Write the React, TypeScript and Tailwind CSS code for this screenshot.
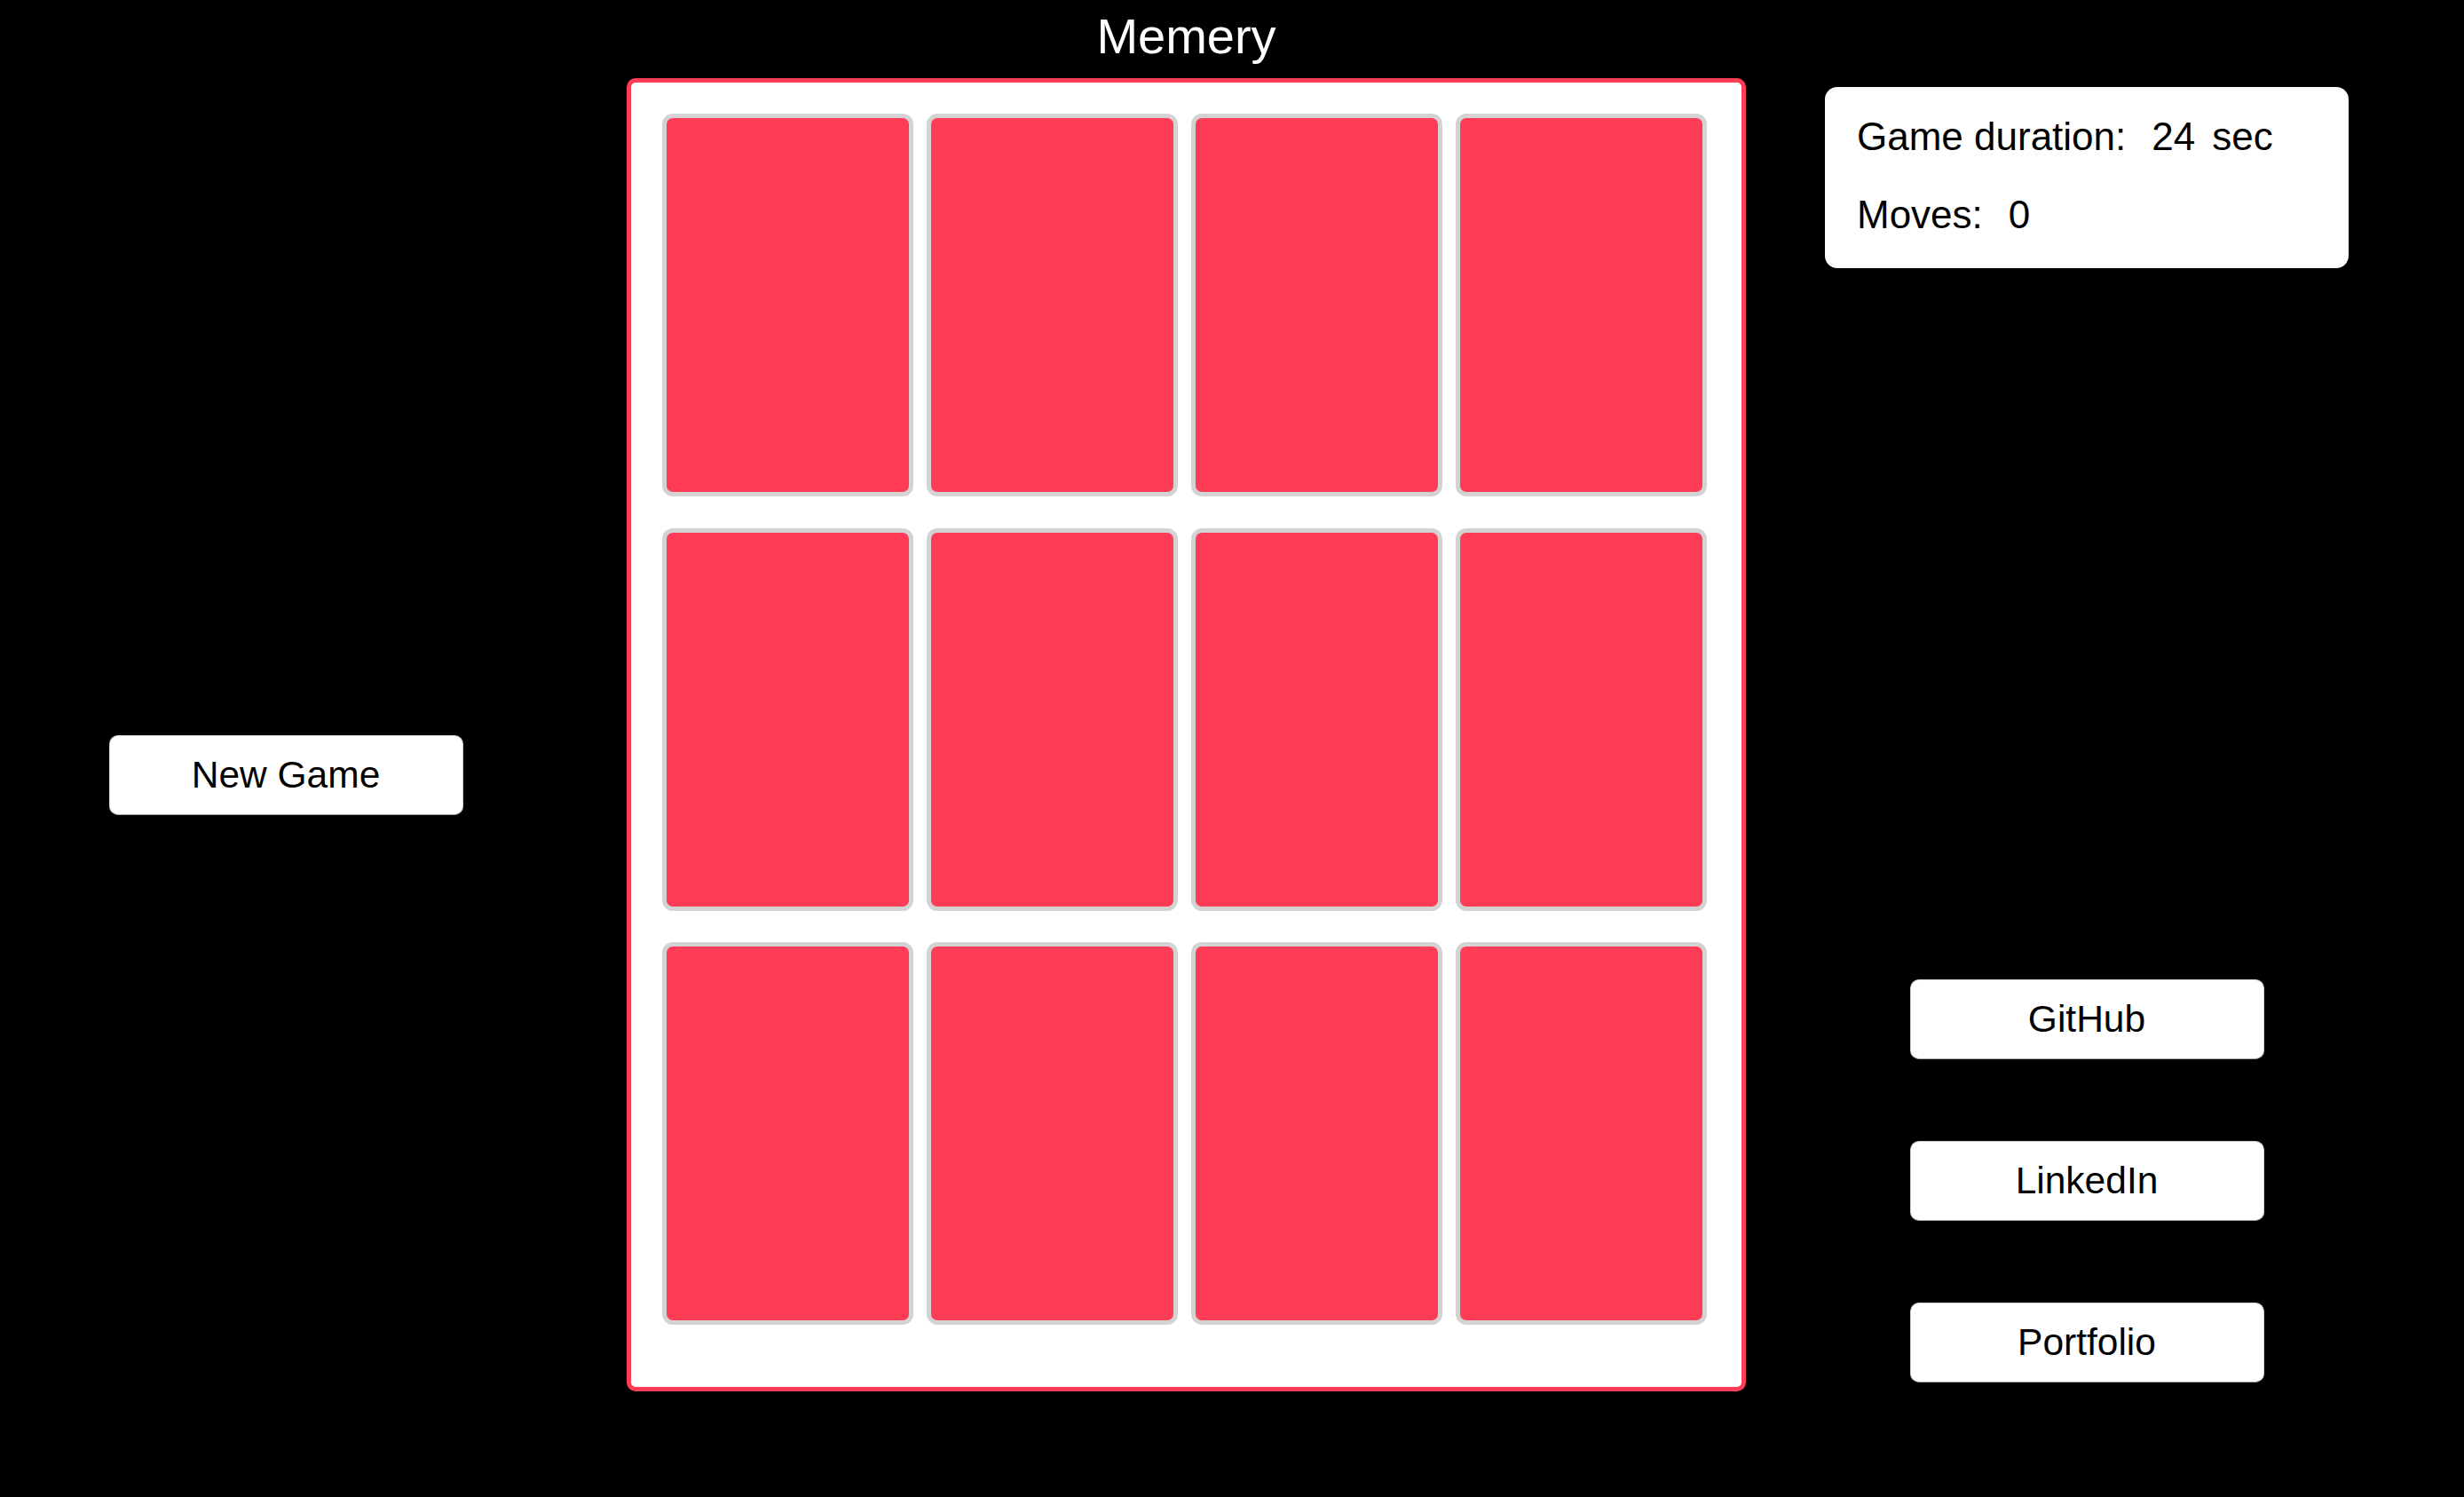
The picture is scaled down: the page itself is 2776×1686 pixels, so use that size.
import React from "react";

const CARD_COUNT = 12;

const MenuButton: React.FC<{ label: string }> = ({ label }) => (
  <button className="w-[399px] h-[90px] rounded-[10px] bg-white border-[1.5px] border-[#d4d4d4] border-b-[#a8a8a8] text-[42.5px] leading-none text-black">
    {label}
  </button>
);

const Card: React.FC = () => (
  <div className="h-[431px] rounded-[12px] border-[5px] border-[#d3d3d3] bg-[#ff3c56]" />
);

export default function App() {
  const duration = 24;
  const moves = 0;

  return (
    <div className="min-h-screen w-full bg-black flex font-['Liberation_Sans',Arial,sans-serif]">
      {/* left side */}
      <aside className="w-[644px] shrink-0 flex flex-col items-center pt-[828px]">
        <MenuButton label="New Game" />
      </aside>

      {/* board */}
      <main className="ml-[62px] shrink-0 flex flex-col items-center">
        <h1 className="pt-[13px] text-[56px] leading-[55px] text-white">Memery</h1>
        <div className="mt-[20px] w-[1261px] rounded-[10px] border-[5px] border-[#ff3c56] bg-white pt-[35px] pl-[35px] pb-[70px]">
          <div className="grid grid-cols-[repeat(4,283px)] gap-x-[15px] gap-y-[35.5px]">
            {Array.from({ length: CARD_COUNT }).map((_, i) => (
              <Card key={i} />
            ))}
          </div>
        </div>
      </main>

      {/* right side */}
      <aside className="ml-[89px] w-[590px] shrink-0 flex flex-col pt-[98px]">
        <div className="rounded-[14px] bg-white pl-[36px] pt-[32px] pb-[36px] text-[44px] leading-[48px] text-black">
          <p className="flex">
            <span>Game duration:</span>
            <span className="ml-[29px]">{duration}</span>
            <span className="ml-[19px]">sec</span>
          </p>
          <p className="mt-[40px] flex">
            <span>Moves:</span>
            <span className="ml-[29px]">{moves}</span>
          </p>
        </div>

        <div className="mt-[801px] flex flex-col items-center gap-[92px]">
          <MenuButton label="GitHub" />
          <MenuButton label="LinkedIn" />
          <MenuButton label="Portfolio" />
        </div>
      </aside>
    </div>
  );
}
